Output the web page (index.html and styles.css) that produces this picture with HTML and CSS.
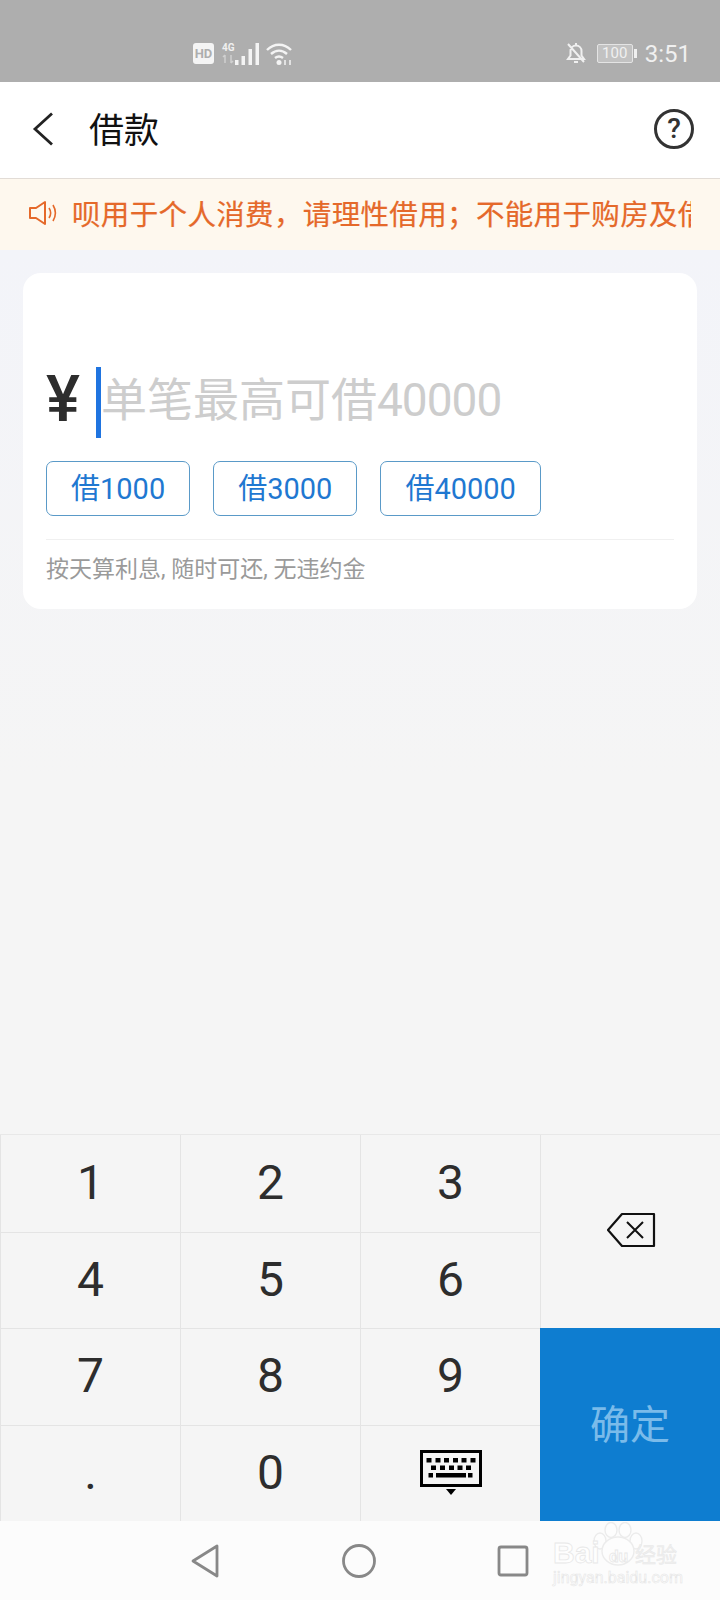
FILE: index.html
```html
<!DOCTYPE html>
<html lang="zh-CN">
<head>
    <meta charset="UTF-8">
    <meta name="viewport" content="width=device-width, initial-scale=1.0">
    <title>借款</title>
    <link rel="stylesheet" href="styles.css">
</head>
<body>
    <div class="status-bar">
        <div class="status-center">
            <span class="hd-badge">HD</span>
            <div class="network">
                <span class="network-label">4G</span>
                <svg class="network-arrows" width="12" height="10" viewBox="0 0 12 10"><path d="M3 1v8M1 3l2-2M9 1v8M9 9l2-2" stroke="#d0d0d0" stroke-width="1.5" fill="none"/></svg>
            </div>
            <svg class="signal" width="24" height="24" viewBox="0 0 24 24"><path d="M0 18h3.500v5H0zM6.500 14H10v9H6.500zM13.500 7H17v16h-3.500zM20.500 1H24v22h-3.500z" fill="#f4f4f4"/></svg>
            <svg class="wifi" width="28" height="24" viewBox="0 0 28 24"><path d="M2 8c7-7 17-7 24 0M6 12c5-4.500 11-4.500 16 0M10 16c2.500-2 5.500-2 8 0" stroke="#f4f4f4" stroke-width="2.400" fill="none"/><circle cx="14" cy="20.500" r="2.500" fill="#f4f4f4"/><path d="M20 18v5M25 18v5" stroke="#f4f4f4" stroke-width="1.500"/></svg>
        </div>
        <div class="status-right">
            <svg class="bell" width="22" height="22" viewBox="0 0 22 22"><path d="M3 17h16l-2.500-3.500V9c0-3-2.300-5.500-5.500-5.500S5.500 6 5.500 9v4.500zM9 20h4M11 1v2.500M3 2l16 18" stroke="#f0f0f0" stroke-width="2" fill="none"/></svg>
            <div class="battery">
                <span class="battery-body">100</span>
                <span class="battery-cap"></span>
            </div>
            <span class="clock">3:51</span>
        </div>
    </div>

    <header class="top-bar">
        <svg class="back-icon" width="22" height="34" viewBox="0 0 22 34"><path d="M20 1.500 3 17l17 15.500" stroke="#222" stroke-width="2.800" fill="none"/></svg>
        <h1 class="page-title">借款</h1>
        <div class="help-icon">?</div>
    </header>

    <div class="notice">
        <svg class="speaker" width="30" height="26" viewBox="0 0 30 26"><path d="M2 8h6l9-6v22l-9-6H2z" stroke="#e5692a" stroke-width="2" stroke-linejoin="round" fill="none"/><path d="M21 8c2 3 2 7 0 10M25 5c3 5 3 11 0 16" stroke="#e5692a" stroke-width="1.600" fill="none"/></svg>
        <p class="notice-text">呗用于个人消费，请理性借用；不能用于购房及借</p>
    </div>

    <main class="content">
        <section class="loan-card">
            <div class="amount-row">
                <span class="yen">¥</span>
                <span class="cursor"></span>
                <span class="placeholder">单笔最高可借<span class="placeholder-num">40000</span></span>
            </div>
            <div class="quick-amounts">
                <button class="quick-btn">借1000</button>
                <button class="quick-btn">借3000</button>
                <button class="quick-btn">借40000</button>
            </div>
            <p class="hint">按天算利息, 随时可还, 无违约金</p>
        </section>
    </main>

    <div class="keypad">
        <div class="key">1</div>
        <div class="key">2</div>
        <div class="key">3</div>
        <div class="key key-delete">
            <svg width="50" height="36" viewBox="0 0 50 36"><path d="M16 2h32v32H16L2 18z" stroke="#111" stroke-width="2.200" stroke-linejoin="round" fill="none"/><path d="M21 10l16 16M37 10 21 26" stroke="#111" stroke-width="2"/></svg>
        </div>
        <div class="key">4</div>
        <div class="key">5</div>
        <div class="key">6</div>
        <div class="key">7</div>
        <div class="key">8</div>
        <div class="key">9</div>
        <div class="key key-confirm">确定</div>
        <div class="key key-dot">.</div>
        <div class="key">0</div>
        <div class="key">
            <svg class="keyboard-icon" width="62" height="46" viewBox="0 0 62 46">
                <rect x="1.500" y="1.500" width="59" height="34" fill="#f5f5f5" stroke="#000" stroke-width="3"/>
                <path d="M6.500 8h5v4.500h-5zM15.500 8h5v4.500h-5zM24 8h5v4.500h-5zM33 8h5v4.500h-5zM41.500 8h5v4.500h-5zM50.500 8h5v4.500h-5zM11 15.500h5V20h-5zM20 15.500h5V20h-5zM29 15.500h5V20h-5zM37.500 15.500h5V20h-5zM46 15.500h5V20h-5zM8.500 23H13v4.500H8.500zM16 23h30v4.500H16zM48 23h4.500v4.500H48z" fill="#000"/>
                <path d="M26 39h10l-5 6z" fill="#000"/>
            </svg>
        </div>
    </div>

    <nav class="nav-bar">
        <svg width="30" height="36" viewBox="0 0 30 36"><path d="M27 3v30L3 18z" stroke="#888" stroke-width="2.800" stroke-linejoin="round" fill="none"/></svg>
        <svg width="36" height="36" viewBox="0 0 36 36"><circle cx="18" cy="18" r="15.500" stroke="#888" stroke-width="2.800" fill="none"/></svg>
        <svg width="32" height="32" viewBox="0 0 32 32"><rect x="2" y="2" width="28" height="28" rx="2" stroke="#888" stroke-width="2.800" fill="none"/></svg>
    </nav>

    <div class="watermark">
        <svg class="paw" width="60" height="44" viewBox="0 0 60 44"><g stroke="#ececec" stroke-width="1.400" fill="#fdfdfd"><ellipse cx="11" cy="19" rx="6" ry="8"/><ellipse cx="22" cy="8" rx="6" ry="7.500"/><ellipse cx="36" cy="8" rx="6" ry="7.500"/><ellipse cx="47" cy="19" rx="6" ry="8"/><ellipse cx="29" cy="29" rx="16" ry="14"/></g></svg>
        <div class="wm-brand"><span class="wm-bai">Bai</span><span class="wm-du">du</span><span class="wm-jy">经验</span></div>
        <div class="wm-url">jingyan.baidu.com</div>
    </div>
</body>
</html>
```

FILE: styles.css
```css
* {
    box-sizing: border-box;
}
body {
    margin: 0;
    width: 720px;
    height: 1600px;
    position: relative;
    display: flex;
    flex-direction: column;
    overflow: hidden;
    font-family: Roboto, "Noto Sans CJK SC", sans-serif;
    background-color: #f5f5f5;
}

/* status bar */
.status-bar {
    height: 82px;
    flex-shrink: 0;
    background-color: #aeaeae;
    padding: 42px 29px 0 193px;
    display: flex;
    justify-content: space-between;
    color: #f0f0f0;
}
.status-center,
.status-right {
    display: flex;
    align-items: flex-start;
}
.hd-badge {
    width: 21px;
    height: 21px;
    margin-top: 1px;
    border-radius: 3px;
    background-color: #f4f4f4;
    color: #aeaeae;
    font-size: 13px;
    font-weight: 700;
    line-height: 21px;
    text-align: center;
}
.network {
    width: 13px;
    margin-left: 8px;
    display: flex;
    flex-direction: column;
}
.network-label {
    font-size: 10px;
    font-weight: 700;
    line-height: 11px;
}
.network-arrows {
    margin-top: 1px;
}
.wifi {
    margin-left: 6px;
}
.battery {
    margin-left: 10px;
    margin-top: 2px;
    display: flex;
    align-items: center;
}
.battery-body {
    width: 36px;
    height: 19px;
    border: 1px solid #e4e4e4;
    border-radius: 2px;
    background-color: #c2c2c2;
    font-size: 15px;
    line-height: 17px;
    text-align: center;
}
.battery-cap {
    width: 3px;
    height: 9px;
    margin-left: 1px;
    background-color: #f0f0f0;
}
.clock {
    margin-left: 8px;
    font-size: 24px;
    line-height: 24px;
}

/* header */
.top-bar {
    height: 97px;
    flex-shrink: 0;
    padding: 0 26px 2px 32px;
    display: flex;
    align-items: center;
    background-color: #ffffff;
    border-bottom: 1px solid #e2dcd6;
}
.page-title {
    margin: 0 0 4px 35px;
    flex: 1;
    font-size: 35px;
    font-weight: 400;
    color: #111;
}
.help-icon {
    width: 40px;
    height: 40px;
    border: 3px solid #333;
    border-radius: 50%;
    font-size: 28px;
    font-weight: 500;
    line-height: 34px;
    text-align: center;
    color: #333;
}

/* notice */
.notice {
    height: 71px;
    flex-shrink: 0;
    padding: 0 0 4px 28px;
    display: flex;
    align-items: center;
    background-color: #fef8ee;
}
.notice-text {
    width: 619px;
    margin: 0 0 0 14px;
    overflow: hidden;
    white-space: nowrap;
    font-size: 28.5px;
    font-weight: 400;
    letter-spacing: 0.35px;
    color: #e5692a;
    -webkit-text-stroke: 0.2px #e5692a;
}

/* card */
.content {
    flex: 1;
    padding: 23px;
    background: linear-gradient(#f3f4f9, #f5f5f5 60%);
}
.loan-card {
    height: 336px;
    padding: 94px 23px 0;
    border-radius: 18px;
    background-color: #ffffff;
}
.amount-row {
    height: 71px;
    display: flex;
    align-items: center;
}
.yen {
    width: 50px;
    padding-bottom: 6px;
    font-size: 64px;
    font-weight: 500;
    color: #2d2d2d;
}
.cursor {
    width: 5px;
    height: 71px;
    background-color: #1f74e0;
}
.placeholder {
    padding-bottom: 14px;
    font-size: 46px;
    color: #cdcdcd;
}
.placeholder-num {
    letter-spacing: -1px;
}
.quick-amounts {
    margin-top: 23px;
    padding-bottom: 23px;
    display: flex;
    gap: 23px;
    border-bottom: 1px solid #f0f0f0;
}
.quick-btn {
    height: 55px;
    padding: 0 24px 5px;
    border: 1px solid #5a9ac8;
    border-radius: 7px;
    background-color: #ffffff;
    font-family: inherit;
    font-size: 29px;
    color: #1f78d1;
}
.hint {
    margin: 10px 0 0;
    font-size: 23px;
    color: #9a9a9a;
}

/* keypad */
.keypad {
    height: 387px;
    flex-shrink: 0;
    display: grid;
    grid-template-columns: repeat(4, 180px);
    grid-template-rows: repeat(4, 1fr);
    background-color: #f5f5f5;
    border-top: 1px solid #e8e8e8;
}
.key {
    padding-bottom: 2px;
    display: flex;
    align-items: center;
    justify-content: center;
    border-left: 1px solid #e4e4e4;
    border-top: 1px solid #e4e4e4;
    font-size: 48px;
    color: #2d2d2d;
}
.keypad > .key:nth-child(-n+4) {
    border-top: none;
}
.key-delete {
    grid-column: 4;
    grid-row: 1 / span 2;
}
.key-delete svg {
    margin-top: -2px;
}
.key-confirm {
    grid-column: 4;
    grid-row: 3 / span 2;
    padding-bottom: 5px;
    border: none;
    background-color: #0e7dd0;
    font-size: 40px;
    color: #7abbea;
}
.keyboard-icon {
    margin-top: 2px;
}

/* nav bar */
.nav-bar {
    height: 79px;
    flex-shrink: 0;
    padding-left: 190px;
    padding-right: 191px;
    display: flex;
    align-items: center;
    justify-content: space-between;
    background-color: #fcfcfc;
}

/* watermark over the nav bar */
.watermark {
    position: absolute;
    left: 553px;
    top: 1522px;
    width: 130px;
    height: 72px;
}
.paw {
    position: absolute;
    left: 36px;
    top: 0;
}
.wm-brand {
    position: absolute;
    left: 0;
    top: 14px;
    display: flex;
    align-items: center;
    color: #fefefe;
    -webkit-text-stroke: 0.8px #e8e8e8;
}
.wm-bai {
    width: 49px;
    font-family: "Liberation Sans", sans-serif;
    font-size: 30px;
    font-weight: 700;
}
.wm-du {
    width: 33px;
    font-size: 17px;
    font-weight: 700;
    text-align: center;
    margin-top: 6px;
}
.wm-jy {
    font-size: 21px;
    -webkit-text-stroke: 0.5px #e8e8e8;
    color: #f0f0f0;
}
.wm-url {
    position: absolute;
    left: 0;
    top: 46px;
    font-size: 16px;
    color: #fdfdfd;
    -webkit-text-stroke: 0.5px #e4e4e4;
}
```
